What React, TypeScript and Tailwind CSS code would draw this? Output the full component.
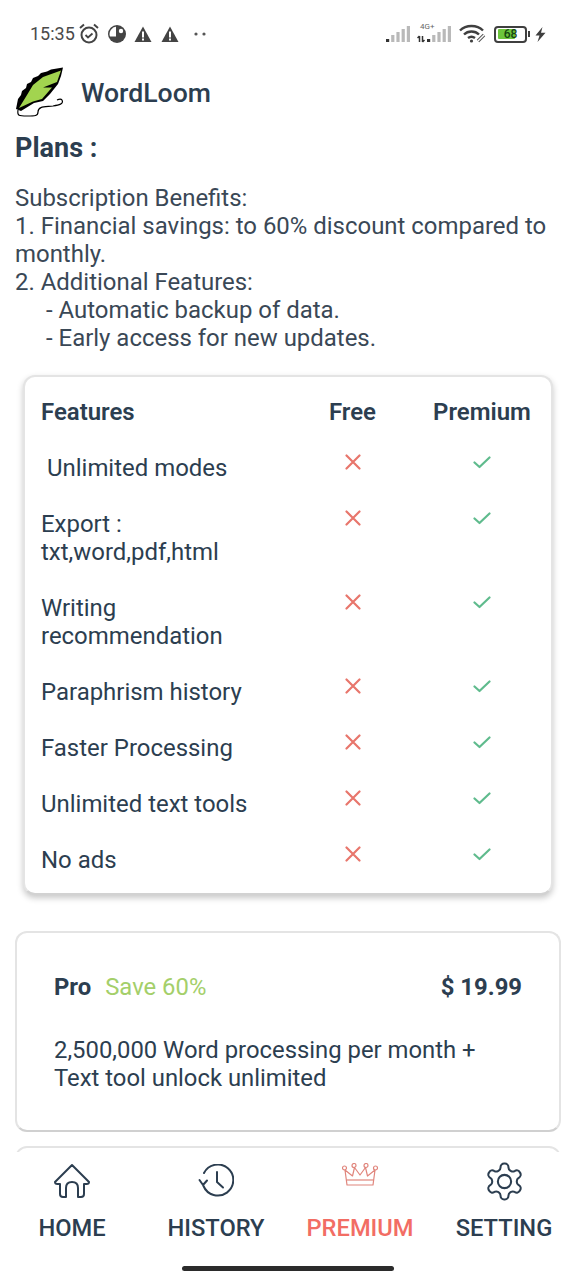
import React from "react";

function X() {
  return (
    <svg width="16" height="16" viewBox="0 0 16 16" fill="none" stroke="#e8766c" strokeWidth="2.2" strokeLinecap="round">
      <path d="M1.5 1.5 L14.5 14.5 M14.5 1.5 L1.5 14.5" />
    </svg>
  );
}
function Check() {
  return (
    <svg width="18" height="13" viewBox="0 0 18 13" fill="none" stroke="#5fbb8d" strokeWidth="2.2" strokeLinecap="round" strokeLinejoin="round">
      <path d="M1.5 6.5 L6.5 11 L16.5 1.5" />
    </svg>
  );
}
function Row({ label, cls }: { label: React.ReactNode; cls?: string }) {
  return (
    <div className="grid grid-cols-[268px_87px_172px] items-start">
      <div className={"text-[23.95px] leading-[28px] text-[#2c3e50] " + (cls ?? "")}>{label}</div>
      <div className="flex justify-center h-[16px] items-center"><X /></div>
      <div className="flex justify-center h-[16px] items-center"><Check /></div>
    </div>
  );
}

function Signal({ x = 0 }: { x?: number }) {
  const hs = [3, 7, 10, 13, 16];
  return (
    <g transform={`translate(${x} 0)`}>
      {hs.map((h, i) => (
        <rect key={i} x={i * 5.2} y={17 - h} width="3.2" height={h} fill={i === 0 ? "#333" : "#b9b9b9"} />
      ))}
    </g>
  );
}

function StatusBar() {
  return (
    <div className="h-[60px] shrink-0 relative flex items-center justify-between pl-[30px] pr-[30px] pt-[8px] text-[#444]">
      <div className="flex items-center">
        <span className="text-[18px] leading-[22px] text-[#4a4a4a]">15:35</span>
        <svg className="ml-[3px]" width="22" height="22" viewBox="0 0 22 22" fill="none" stroke="#444" strokeWidth="2">
          <circle cx="11" cy="12" r="7.5" />
          <path d="M7.5 12 L10 14.5 L14.5 10.5" strokeWidth="1.8" />
          <path d="M2 5 L6 1.5 M20 5 L16 1.5" />
        </svg>
        <svg className="ml-[7px]" width="20" height="20" viewBox="0 0 20 20">
          <circle cx="10" cy="10" r="9" fill="#444" />
          <path d="M11 2.5 L9.5 2.5 A7.5 7.5 0 0 0 3 12.5 L11 12.5 Z" fill="#fff" />
          <circle cx="14" cy="7" r="2.2" fill="#fff" />
          <rect x="9" y="2" width="2" height="11" fill="#444" />
        </svg>
        <svg className="ml-[7px]" width="18" height="17" viewBox="0 0 18 17">
          <path d="M9 0.5 L17.5 16 L0.5 16 Z" fill="#444" />
          <rect x="8" y="5.5" width="2" height="6" fill="#fff" />
          <rect x="8" y="12.5" width="2" height="2" fill="#fff" />
        </svg>
        <svg className="ml-[9px]" width="18" height="17" viewBox="0 0 18 17">
          <path d="M9 0.5 L17.5 16 L0.5 16 Z" fill="#444" />
          <rect x="8" y="5.5" width="2" height="6" fill="#fff" />
          <rect x="8" y="12.5" width="2" height="2" fill="#fff" />
        </svg>
        <svg className="ml-[14px]" width="14" height="6" viewBox="0 0 14 6" fill="#555">
          <circle cx="3" cy="3" r="1.6" />
          <circle cx="11" cy="3" r="1.6" />
        </svg>
      </div>
      <div className="flex items-center">
        <svg width="25" height="18" viewBox="0 0 25 18"><Signal /></svg>
        <div className="relative ml-[6px] w-[36px] h-[18px]">
          <span className="absolute left-[3px] -top-[3px] text-[8px] leading-[9px] text-[#666]">4G+</span>
          <svg className="absolute left-0 top-0" width="36" height="18" viewBox="0 0 36 18">
            <path d="M2.5 11 L2.5 17 M0.5 13 L2.5 11 M5.5 11 L5.5 17 M5.5 17 L7.5 15" stroke="#333" strokeWidth="1.5" fill="none" />
            <Signal x={10} />
          </svg>
        </div>
        <svg className="ml-[6px]" width="28" height="20" viewBox="0 0 28 20" fill="none" stroke="#3f3f3f" strokeWidth="2.4">
          <path d="M1 6.5 C7 0.5 18 0.5 24 6.5" />
          <path d="M5 10.5 C9 6.5 16 6.5 20 10.5" />
          <path d="M9 14 C11 12.5 14 12.5 16 14" />
          <circle cx="12.5" cy="17" r="1.6" fill="#3f3f3f" stroke="none" />
          <path d="M19 17 L25 11" stroke="#555" strokeWidth="3.4" />
          <path d="M19 17 L25 11" stroke="#fff" strokeWidth="1.4" />
        </svg>
        <div className="ml-[7px] w-[33px] h-[17px] rounded-[4px] border-2 border-[#3f3f3f] p-[1.5px] relative">
          <div className="h-full w-[66%] bg-[#6cc63c] rounded-[1px]" />
          <span className="absolute inset-0 flex items-center justify-center text-[12px] leading-[13px] font-medium text-[#14470f]">68</span>
        </div>
        <div className="ml-[1px] w-[2px] h-[6px] bg-[#3f3f3f]" />
        <svg className="ml-[5px]" width="11" height="15" viewBox="0 0 11 15" fill="#3f3f3f">
          <path d="M7.5 0 L0.5 8.5 L4.5 8.5 L2.5 15 L10.5 5.8 L6 5.8 Z" />
        </svg>
      </div>
    </div>
  );
}

function Logo() {
  return (
    <svg className="-translate-y-px" width="50" height="52" viewBox="0 0 50 52">
      <path d="M1 43 L3 33 L6 29 L7 25 L11 22 L12 18 L16 16 L18 12 L23 10 L26 7 L32 5.5 L36 3.5 L48 1.5 L46 10 L43 18 L35 28 L28 35 L19 37 L6 45 Z" fill="#000" />
      <path d="M4 42 L12 29 L18 19 L28 11 L46 4.5 L42 16 L28 21.5 L37 21.5 L27 33 L18 35.5 Z" fill="#a2d44f" />
      <path d="M3 44 C2 50 4 50 12 50 C20 50 23 50 23 46 C23 40 30 41 38 40 C44 39 49 38 47 34 C46 32.5 44 33 42 34" fill="none" stroke="#000" strokeWidth="1.2" strokeLinejoin="round" />
    </svg>
  );
}

function NavItem({ icon, label, active }: { icon: React.ReactNode; label: string; active?: boolean }) {
  return (
    <div className="flex flex-col items-center">
      <div className="h-[36px] w-[36px] flex items-center justify-center">{icon}</div>
      <span className={"mt-[15px] text-[23.7px] leading-[28px] font-medium " + (active ? "text-[#f26d64]" : "text-[#2c3e50]")}>{label}</span>
    </div>
  );
}

export default function App() {
  return (
    <div className="relative w-[576px] h-[1280px] overflow-hidden bg-white flex flex-col font-['Roboto',sans-serif] text-[#2c3e50]">
      <StatusBar />
      <div className="flex items-center h-[54px] shrink-0 pl-[15px] mt-[6px]">
        <Logo />
        <span className="ml-[16px] text-[26.6px] leading-[32px] font-medium text-[#2c3e50]">WordLoom</span>
      </div>
      <div className="flex-1 min-h-0 overflow-hidden">
        <div className="px-[15px] pt-[12px]">
          <div className="text-[27px] leading-[32px] font-bold">Plans :</div>
          <div className="mt-[20px] text-[23.95px] leading-[28px] text-[#3a4856]">
            <div>Subscription Benefits:</div>
            <div>1. Financial savings: to 60% discount compared to monthly.</div>
            <div>2. Additional Features:</div>
            <div className="pl-[31px]">- Automatic backup of data.</div>
            <div className="pl-[31px]">- Early access for new updates.</div>
          </div>
        </div>
        <div className="mx-[23px] mt-[23px] h-[520px] bg-white rounded-[12px] border-2 border-[#e4e4e4] border-b-[#d2d2d2] shadow-[0_3px_6px_rgba(0,0,0,0.22)] pl-[16px] pt-[21px] flex flex-col gap-[28px]">
          <div className="grid grid-cols-[268px_87px_172px] items-center text-[23.95px] leading-[28px] font-semibold">
            <div>Features</div>
            <div className="text-center">Free</div>
            <div className="text-center">Premium</div>
          </div>
          <Row label="Unlimited modes" cls="pl-[6px]" />
          <Row label={<>Export :<br />txt,word,pdf,html</>} />
          <Row label={<>Writing<br />recommendation</>} />
          <Row label="Paraphrism history" />
          <Row label="Faster Processing" />
          <Row label="Unlimited text tools" />
          <Row label="No ads" />
        </div>
        <div className="mx-[15px] mt-[36px] h-[201px] bg-white rounded-[12px] border-2 border-[#e4e4e4] border-b-[#d0d0d0] px-[37px] pt-[40px]">
          <div className="flex justify-between items-center text-[23.85px] leading-[28px]">
            <div className="flex items-center">
              <span className="font-bold">Pro</span>
              <span className="ml-[14px] text-[#a4cf6a]">Save 60%</span>
            </div>
            <span className="font-bold">$ 19.99</span>
          </div>
          <div className="mt-[35px] text-[23.85px] leading-[28px] text-[#2c3e50]">
            2,500,000 Word processing per month +<br />Text tool unlock unlimited
          </div>
        </div>
        <div className="mx-[15px] mt-[14px] h-[100px] bg-white rounded-[12px] border-2 border-[#e4e4e4]" />
      </div>
      <div className="h-[128px] shrink-0 bg-white relative">
        <div className="grid grid-cols-4 pt-[11px]">
          <NavItem
            label="HOME"
            icon={
              <svg width="38" height="36" viewBox="0 0 38 36" fill="none" stroke="#2c3e50" strokeWidth="2" strokeLinejoin="round" strokeLinecap="round" className="shrink-0">
                <path d="M19 2 L36 19 Q36 21 33.5 21 L31 21 L31 31 Q31 34 28 34 L25 34 L25 25 Q25 19 19 19 Q13 19 13 25 L13 34 L10 34 Q7 34 7 31 L7 21 L4.5 21 Q2 21 2 19 Z" />
              </svg>
            }
          />
          <NavItem
            label="HISTORY"
            icon={
              <svg width="36" height="34" viewBox="0 0 36 34" fill="none" stroke="#2c3e50" strokeWidth="2" strokeLinecap="round" strokeLinejoin="round" className="shrink-0">
                <path d="M6 9 A15.5 15.5 0 1 1 5.5 22" />
                <path d="M1.5 16 L5 21 L9 16.5" />
                <path d="M19 8 L19 18 L25 23.5" />
              </svg>
            }
          />
          <NavItem
            active
            label="PREMIUM"
            icon={
              <svg width="36" height="24" viewBox="0 0 36 24" fill="none" stroke="#e0857c" strokeWidth="1.2" strokeLinejoin="round" className="shrink-0 -translate-y-[6px]">
                <circle cx="2.5" cy="5" r="2" />
                <circle cx="12" cy="2.5" r="2" />
                <circle cx="24" cy="2.5" r="2" />
                <circle cx="33.5" cy="5" r="2" />
                <path d="M3 7 L5 22 L31 22 L33 7 L25.5 13 L23.5 4.5 L18 12 L12.5 4.5 L10.5 13 Z" />
                <path d="M4.5 17 L31.5 17" />
              </svg>
            }
          />
          <NavItem
            label="SETTING"
            icon={
              <svg width="43" height="43" viewBox="0 0 24 24" fill="none" stroke="#2c3e50" strokeWidth="1.15" strokeLinecap="round" strokeLinejoin="round" className="shrink-0">
                <path d="M12.22 2h-.44a2 2 0 0 0-2 2v.18a2 2 0 0 1-1 1.73l-.43.25a2 2 0 0 1-2 0l-.15-.08a2 2 0 0 0-2.73.73l-.22.38a2 2 0 0 0 .73 2.73l.15.1a2 2 0 0 1 1 1.72v.51a2 2 0 0 1-1 1.74l-.15.09a2 2 0 0 0-.73 2.73l.22.38a2 2 0 0 0 2.73.73l.15-.08a2 2 0 0 1 2 0l.43.25a2 2 0 0 1 1 1.73V20a2 2 0 0 0 2 2h.44a2 2 0 0 0 2-2v-.18a2 2 0 0 1 1-1.73l.43-.25a2 2 0 0 1 2 0l.15.08a2 2 0 0 0 2.73-.73l.22-.39a2 2 0 0 0-.73-2.73l-.15-.08a2 2 0 0 1-1-1.74v-.5a2 2 0 0 1 1-1.74l.15-.09a2 2 0 0 0 .73-2.73l-.22-.38a2 2 0 0 0-2.73-.73l-.15.08a2 2 0 0 1-2 0l-.43-.25a2 2 0 0 1-1-1.73V4a2 2 0 0 0-2-2z" />
                <circle cx="12" cy="12" r="3.7" />
              </svg>
            }
          />
        </div>
        <div className="absolute left-[182px] top-[114px] w-[212px] h-[5px] rounded-full bg-[#2b2b2b]" />
      </div>
    </div>
  );
}
